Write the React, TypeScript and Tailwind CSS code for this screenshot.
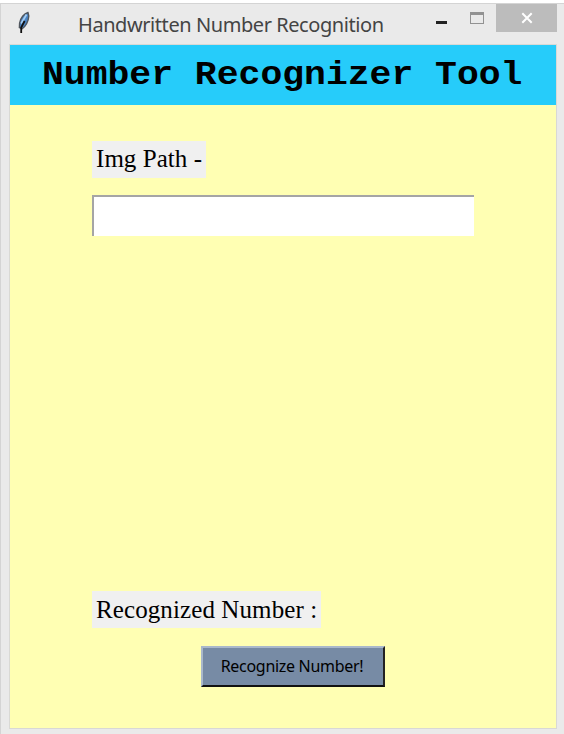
function FeatherIcon() {
  return (
    <svg width="14" height="24" viewBox="0 0 14 24" className="block shrink-0">
      <path d="M11 1.5C7 2.5 3.5 7 2.6 12L2.4 16.5L5 17.8C8.5 16 11.5 10.5 11.8 5Z" fill="#4a84c4" stroke="#50565e" strokeWidth="1.4" />
      <path d="M9.5 3.5L4.2 12.5" stroke="#a5cdf2" strokeWidth="1.8" />
      <path d="M7.6 10L4.2 16.5V22" fill="none" stroke="#101010" strokeWidth="1.8" />
    </svg>
  );
}

function TitleBar() {
  return (
    <header className="flex h-10 items-start pl-[7px]">
      <div className="w-[61px] pl-[9px] pt-[7px]">
        <FeatherIcon />
      </div>
      <h1 className="w-[356px] whitespace-nowrap pl-[9px] pt-[7px] font-['Noto_Sans','Open_Sans',sans-serif] text-[20px] leading-[28px] tracking-[-0.43px] text-[#444]">
        Handwritten Number Recognition
      </h1>
      <button aria-label="Minimize" className="flex h-7 w-[33px] items-start justify-center pt-[17px]">
        <span className="h-[3px] w-[11px] bg-[#222]" />
      </button>
      <button aria-label="Maximize" className="flex h-7 w-[38px] items-start justify-center pt-2">
        <span className="h-3 w-3.5 border border-t-[3px] border-[#929292]" />
      </button>
      <button aria-label="Close" className="flex h-7 w-[61px] items-center justify-center bg-[#bcbcbc]">
        <svg width="12" height="12" viewBox="0 0 12 12">
          <path d="M1.3 1.3L10.7 10.7M10.7 1.3L1.3 10.7" stroke="white" strokeWidth="2" />
        </svg>
      </button>
    </header>
  );
}

export default function App() {
  return (
    <div className="h-[734px] w-[564px] overflow-hidden bg-white pt-[3px]">
      <div className="h-[731px] border-l border-t border-[#d4d4d4] bg-[#eaeaea]">
        <TitleBar />
        <main className="ml-2 flex h-[685px] w-[548px] flex-col border border-[#d9d9d5] bg-[#ffffb3] font-['Liberation_Serif',serif] text-black">
          <h2 className="h-[60px] shrink-0 whitespace-pre bg-[#26ccfa] pl-8 font-['Liberation_Mono',monospace] text-[36.4px] font-bold leading-[62px]">
            <span className="inline-block origin-center scale-y-90">Number Recognizer Tool</span>
          </h2>
          <div className="flex flex-col items-start pl-[82px] pt-[36px]">
            <label className="h-[37px] w-[114px] whitespace-nowrap bg-[#f0f0f0] pl-1 text-[25px] leading-[36px] tracking-[0.05px]">
              Img Path -
            </label>
            <input className="mt-[17px] h-[41px] w-[382px] border-l-2 border-t-2 border-[#a5a5a5] bg-white outline-none" />
            <label className="mt-[355px] h-[37px] w-[229px] whitespace-nowrap bg-[#f0f0f0] pl-1 text-[25px] leading-[37px] tracking-[0.1px]">
              Recognized Number :
            </label>
            <button className="ml-[109px] mt-[18px] h-[41px] w-[184px] whitespace-nowrap border-2 border-b-[#111] border-l-[#a9b8cb] border-r-[#222] border-t-[#a9b8cb] bg-[#778ba5] pb-0.5 pr-0.5 font-['Noto_Sans','Open_Sans',sans-serif] text-[16px] tracking-[-0.3px]">
              Recognize Number!
            </button>
          </div>
        </main>
      </div>
    </div>
  );
}
